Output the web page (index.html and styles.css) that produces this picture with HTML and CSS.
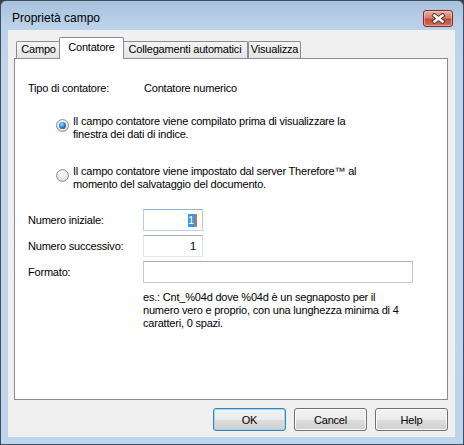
FILE: index.html
```html
<!DOCTYPE html>
<html lang="it">
<head>
<meta charset="utf-8">
<title>Proprietà campo</title>
<link rel="stylesheet" href="styles.css">
</head>
<body>
<div class="window">
  <div class="titlebar">
    <span class="title">Proprietà campo</span>
    <div class="close">
      <svg width="15" height="11" viewBox="0 0 15 11">
        <path d="M3.5 2.5 L11.5 8.5 M11.5 2.5 L3.5 8.5" stroke="#5a3a38" stroke-width="4.4" stroke-linecap="square" fill="none"/>
        <path d="M3.5 2.5 L11.5 8.5 M11.5 2.5 L3.5 8.5" stroke="#ffffff" stroke-width="2.4" stroke-linecap="square" fill="none"/>
      </svg>
    </div>
  </div>
  <div class="client">
    <div class="tabs">
      <div class="tab t-campo">Campo</div>
      <div class="tab sel t-cont">Contatore</div>
      <div class="tab t-coll">Collegamenti automatici</div>
      <div class="tab t-vis">Visualizza</div>
    </div>
    <div class="panel">
      <div class="type-row"><span class="lbl">Tipo di contatore:</span><span>Contatore numerico</span></div>
      <div class="radio r1"><span class="rb checked"></span><span>Il campo contatore viene compilato prima di visualizzare la<br>finestra dei dati di indice.</span></div>
      <div class="radio r2"><span class="rb"></span><span>Il campo contatore viene impostato dal server Therefore™ al<br>momento del salvataggio del documento.</span></div>
      <div class="fields">
        <div class="field"><span class="lbl">Numero iniziale:</span><div class="input short focus"><span class="seltext">1</span><span class="caret"></span></div></div>
        <div class="field"><span class="lbl">Numero successivo:</span><div class="input short">1</div></div>
        <div class="field"><span class="lbl">Formato:</span><div class="input long dark"></div></div>
      </div>
      <p class="hint">es.: Cnt_%04d dove %04d è un segnaposto per il<br>numero vero e proprio, con una lunghezza minima di 4<br>caratteri, 0 spazi.</p>
    </div>
    <div class="buttons">
      <div class="btn default">OK</div>
      <div class="btn">Cancel</div>
      <div class="btn">Help</div>
    </div>
  </div>
</div>
</body>
</html>
```

FILE: styles.css
```css
html, body {
  margin: 0;
  padding: 0;
}

body {
  width: 464px;
  height: 445px;
  overflow: hidden;
  background: #3a3a3a;
  font-family: "Liberation Sans", Arial, sans-serif;
  font-size: 11px;
  letter-spacing: -0.2px;
  color: #000;
}

.window {
  box-sizing: border-box;
  width: 464px;
  height: 445px;
  border: 1px solid #3f4f60;
  border-radius: 6px 6px 0 0;
  background: linear-gradient(#a8c1dc 0px, #bbd1e9 24px, #c0d6ec 60px, #bfd5eb 100%);
  display: flex;
  flex-direction: column;
}

.titlebar {
  flex: none;
  height: 29px;
  display: flex;
  justify-content: space-between;
  align-items: flex-start;
}

.title {
  font-size: 12px;
  line-height: 15px;
  letter-spacing: 0;
  margin: 10px 0 0 11px;
}

.close {
  box-sizing: border-box;
  width: 30px;
  height: 17px;
  margin: 9px 10px 0 0;
  border: 1px solid #7a3029;
  border-radius: 3px;
  background: linear-gradient(#eab0a3 0%, #d87d6b 45%, #c44a36 55%, #d0735d 100%);
  box-shadow: inset 0 0 0 1px rgba(255, 220, 210, 0.45);
  display: flex;
  align-items: center;
  justify-content: center;
}

.client {
  box-sizing: border-box;
  flex: none;
  height: 407px;
  margin: 0 8px 0 7px;
  padding: 7px 7px 0 6px;
  background: #f0f0f0;
}

.tabs {
  display: flex;
  align-items: flex-end;
  height: 21px;
  padding-left: 2px;
}

.tab {
  box-sizing: border-box;
  flex: none;
  height: 17px;
  border: 1px solid #898c95;
  border-bottom: none;
  border-radius: 2px 2px 0 0;
  background: linear-gradient(#f4f4f4, #e4e4e4);
  text-align: center;
  line-height: 15px;
  white-space: nowrap;
}

.tab.sel {
  height: 22px;
  margin: 0 -2px -1px;
  padding-top: 2px;
  background: #fff;
  position: relative;
  z-index: 2;
}

.t-campo { width: 45px; }
.t-cont { width: 65px; }
.t-coll { width: 126px; }
.t-vis { width: 53px; }

.panel {
  box-sizing: border-box;
  height: 342px;
  border: 1px solid #898c95;
  background: #fff;
  padding: 23px 0 0 13px;
  line-height: 13px;
}

.type-row {
  display: flex;
}

.lbl {
  flex: none;
  width: 116px;
}

.radio {
  display: flex;
  align-items: flex-start;
  margin-left: 28px;
}

.r1 { margin-top: 20px; }
.r2 { margin-top: 24px; }

.rb {
  box-sizing: border-box;
  flex: none;
  position: relative;
  width: 13px;
  height: 13px;
  margin: 4px 4px 0 0;
  border-radius: 50%;
  border: 1px solid #8f9094;
  background: radial-gradient(circle at 50% 35%, #fbfbfb 0%, #e6e6e6 55%, #cfcfcf 100%);
}

.rb.checked::after {
  content: "";
  position: absolute;
  left: 2px;
  top: 2px;
  width: 7px;
  height: 7px;
  border-radius: 50%;
  background: radial-gradient(circle at 40% 35%, #a4e0ff 0%, #2a86d8 45%, #0d3f7a 100%);
}

.fields {
  margin-top: 18px;
  display: flex;
  flex-direction: column;
  gap: 4px;
}

.field {
  display: flex;
  align-items: center;
  height: 22px;
}

.field .lbl {
  width: 115px;
  line-height: 22px;
}

.input {
  box-sizing: border-box;
  height: 22px;
  border: 1px solid;
  border-color: #abadb3 #dbdfe6 #e3e9ef #e2e3ea;
  background: #fff;
  display: flex;
  align-items: center;
  justify-content: flex-end;
  padding-right: 6px;
}

.input.short { width: 60px; }
.input.long { width: 270px; }

.input.focus {
  border-color: #8fb3d6 #b0cde6 #b7d5ec #b0cde6;
  padding-right: 5px;
}

.input.dark {
  border-color: #abadb3 #c4c8cf #c9ced6 #c4c8cf;
}

.seltext {
  background: #3399ff;
  color: #fff;
  line-height: 13px;
  padding: 0 1px 0 0;
}

.caret {
  width: 2px;
  height: 13px;
  background: #d2751c;
}

.hint {
  margin: 8px 0 0 115px;
  line-height: 13px;
}

.buttons {
  display: flex;
  justify-content: flex-end;
  gap: 8px;
  margin-top: 8px;
}

.btn {
  box-sizing: border-box;
  width: 73px;
  height: 23px;
  border: 1px solid #707070;
  border-radius: 3px;
  background: linear-gradient(#f2f2f2 0%, #ebebeb 50%, #dddddd 51%, #cfcfcf 100%);
  box-shadow: inset 0 0 0 1px #fbfbfb;
  display: flex;
  align-items: center;
  justify-content: center;
}

.btn.default {
  border-color: #3c7fb1;
  box-shadow: inset 0 0 0 1px #9fdaf6;
}
```
